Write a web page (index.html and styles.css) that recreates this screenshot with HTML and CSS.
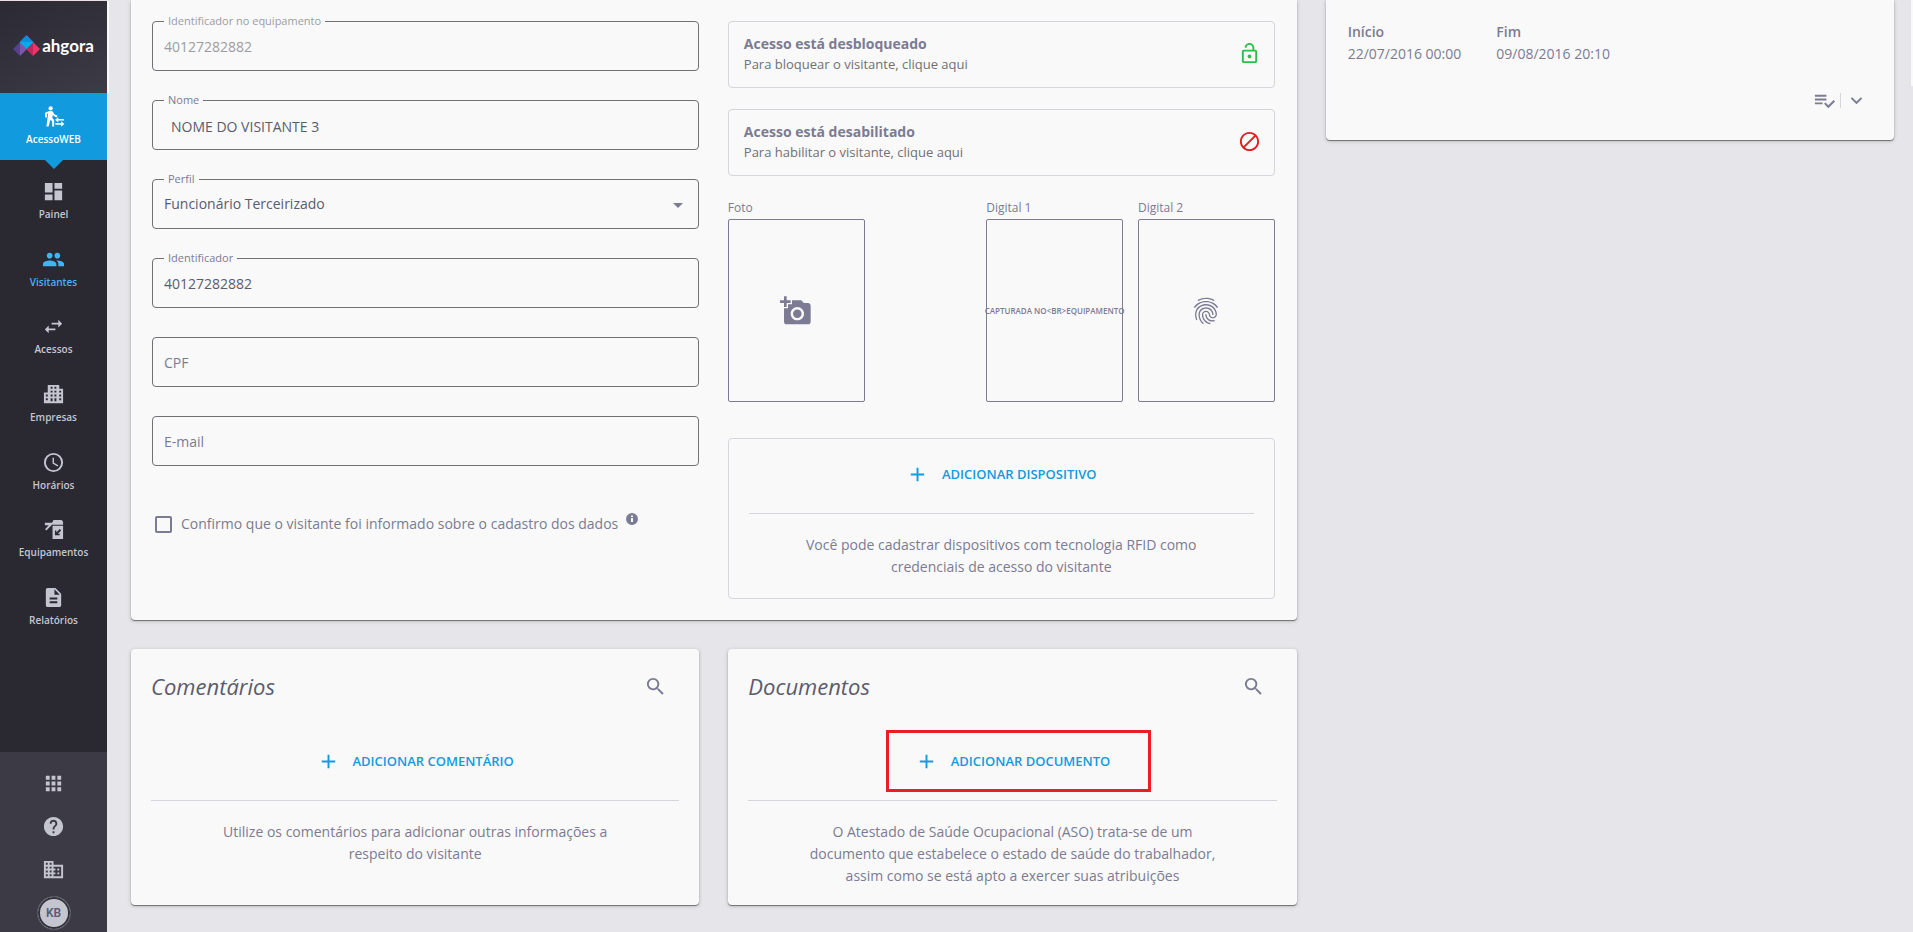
FILE: index.html
```html
<!DOCTYPE html>
<html lang="pt-BR">
<head>
<meta charset="utf-8">
<title>Ahgora - Visitantes</title>
<link rel="stylesheet" href="styles.css">
</head>
<body>
<div class="app">
  <aside class="sidebar">
    <a class="brand" href="#">
      <svg class="brand-mark" viewBox="0 0 27 22" aria-hidden="true">
        <path fill="#5a3f8f" d="M0 14l7-7v14z"/><path fill="#7e57a8" d="M7 7l7 7-7 7z"/>
        <path fill="#c2255f" d="M13 14l7-7v14z"/><path fill="#ee3466" d="M20 7l7 7-7 7z"/>
        <path fill="#0b8fd9" d="M13.500 0l7 7h-14z"/><path fill="#08a9ef" d="M6.500 7h14l-7 7z"/>
      </svg>
      <span class="brand-name">ahgora</span>
    </a>
    <a class="module" href="#">
      <svg class="icon" viewBox="0 0 24 24" aria-hidden="true"><circle cx="9" cy="3.400" r="2.200"/><path d="M7.600 6.200 3.200 8.200V13h1.900V9.500l1.300-.6L4.600 22.500h2.300l1.900-7.200 1.800 2v5.200h2.100v-6.800l-2-2.200.6-3c1.100 1.300 2.500 2.100 4.600 2.200V10.700c-1.700 0-2.800-.7-3.500-1.900l-.9-1.500c-.8-1.200-2-1.600-3.900-1.100zM17 12.700l-3.300 2.800 3.300 2.800v-2h6v-1.700h-6zM20 16.900v2h-6v1.700h6v2l3.300-2.900z"/></svg>
      <span>AcessoWEB</span>
    </a>
    <nav class="menu">
      <ul class="menu-list">
        <li><a class="menu-item" href="#"><svg class="icon" viewBox="0 0 24 24" aria-hidden="true"><path d="M3 13h8V3H3v10zm0 8h8v-6H3v6zm10 0h8V11h-8v10zm0-18v6h8V3h-8z"/></svg><span>Painel</span></a></li>
        <li><a class="menu-item menu-item--current" href="#"><svg class="icon" viewBox="0 0 24 24" aria-hidden="true"><path d="M16 11c1.660 0 2.990-1.340 2.990-3S17.660 5 16 5s-3 1.340-3 3 1.340 3 3 3zm-8 0c1.660 0 2.990-1.340 2.990-3S9.660 5 8 5 5 6.340 5 8s1.340 3 3 3zm0 2c-2.330 0-7 1.170-7 3.500V19h14v-2.500c0-2.330-4.670-3.500-7-3.500zm8 0c-.29 0-.62.02-.97.05 1.160.84 1.970 1.970 1.970 3.450V19h6v-2.500c0-2.330-4.670-3.500-7-3.500z"/></svg><span>Visitantes</span></a></li>
        <li><a class="menu-item" href="#"><svg class="icon" viewBox="0 0 24 24" aria-hidden="true"><path d="M6.990 11L3 15l3.990 4v-3H14v-2H6.990v-3zM21 9l-3.990-4v3H10v2h7.010v3L21 9z"/></svg><span>Acessos</span></a></li>
        <li><a class="menu-item" href="#"><svg class="icon" viewBox="0 0 24 24" aria-hidden="true"><path fill-rule="evenodd" d="M6 2h12v4h4v15H2V10h4zM9 4v2h2V4zM13 4v2h2V4zM9 8v2h2V8zM13 8v2h2V8zM9 12v2h2v-2zM13 12v2h2v-2zM9 16v3h2v-3zM13 16v3h2v-3zM4 12v2h2v-2zM4 16v2h2v-2zM18 8v2h2V8zM18 12v2h2v-2zM18 16v2h2v-2z"/></svg><span>Empresas</span></a></li>
        <li><a class="menu-item" href="#"><svg class="icon" viewBox="0 0 24 24" aria-hidden="true"><path d="M12 20a8 8 0 1 0 0-16 8 8 0 0 0 0 16zm0-18a10 10 0 1 1 0 20 10 10 0 0 1 0-20zm.5 5v5.250l4.500 2.670-.75 1.230L11 13V7h1.500z"/></svg><span>Horários</span></a></li>
        <li><a class="menu-item" href="#"><svg class="icon" viewBox="0 0 24 24" aria-hidden="true"><path fill-rule="evenodd" d="M12 2h8.500L22 4v3H11V6.500L4.500 13 3.200 11.700 7 7.500H3V5h7.500zM11 8h11v14H11zM18.500 11.500l-3.500 3.500V13h-1.500v5h5v-1.500h-2l3.500-3.500z"/></svg><span>Equipamentos</span></a></li>
        <li><a class="menu-item" href="#"><svg class="icon" viewBox="0 0 24 24" aria-hidden="true"><path d="M14 2H6c-1.100 0-2 .9-2 2v16c0 1.100.9 2 2 2h12c1.100 0 2-.9 2-2V8l-6-6zm2 16H8v-2h8v2zm0-4H8v-2h8v2zm-3-5V3.500L18.500 9H13z"/></svg><span>Relatórios</span></a></li>
      </ul>
    </nav>
    <div class="tools">
      <button class="tool" aria-label="Aplicativos"><svg class="icon" viewBox="0 0 24 24" aria-hidden="true"><path d="M4 8h4V4H4v4zm6 12h4v-4h-4v4zm-6 0h4v-4H4v4zm0-6h4v-4H4v4zm6 0h4v-4h-4v4zm6-10v4h4V4h-4zm-6 4h4V4h-4v4zm6 6h4v-4h-4v4zm0 6h4v-4h-4v4z"/></svg></button>
      <button class="tool" aria-label="Ajuda"><svg class="icon" viewBox="0 0 24 24" aria-hidden="true"><path d="M12 2C6.480 2 2 6.480 2 12s4.480 10 10 10 10-4.480 10-10S17.520 2 12 2zm1 17h-2v-2h2v2zm2.070-7.750l-.9.92C13.450 12.900 13 13.500 13 15h-2v-.5c0-1.100.45-2.100 1.170-2.830l1.240-1.260c.37-.36.59-.86.59-1.410 0-1.100-.9-2-2-2s-2 .9-2 2H8c0-2.210 1.790-4 4-4s4 1.790 4 4c0 .88-.36 1.680-.93 2.250z"/></svg></button>
      <button class="tool" aria-label="Empresa"><svg class="icon" viewBox="0 0 24 24" aria-hidden="true"><path d="M12 7V3H2v18h20V7H12zM6 19H4v-2h2v2zm0-4H4v-2h2v2zm0-4H4V9h2v2zm0-4H4V5h2v2zm4 12H8v-2h2v2zm0-4H8v-2h2v2zm0-4H8V9h2v2zm0-4H8V5h2v2zm10 12h-8v-2h2v-2h-2v-2h2v-2h-2V9h8v10zm-2-8h-2v2h2v-2zm0 4h-2v2h2v-2z"/></svg></button>
      <button class="avatar">KB</button>
    </div>
  </aside>

  <main class="content">
    <section class="card card--visitor">
      <form class="visitor-form">
        <div class="field-column">
          <div class="field field--disabled">
            <input class="field-input" id="equip-id" value="40127282882" disabled>
            <label class="field-label" for="equip-id">Identificador no equipamento</label>
          </div>
          <div class="field">
            <input class="field-input field-input--indented" id="name" value="NOME DO VISITANTE 3">
            <label class="field-label" for="name">Nome</label>
          </div>
          <div class="field">
            <select class="field-input" id="profile"><option>Funcionário Terceirizado</option></select>
            <label class="field-label" for="profile">Perfil</label>
            <svg class="field-caret" viewBox="0 0 10 5" aria-hidden="true"><path d="M0 0h10L5 5z"/></svg>
          </div>
          <div class="field">
            <input class="field-input" id="ident" value="40127282882">
            <label class="field-label" for="ident">Identificador</label>
          </div>
          <div class="field"><input class="field-input" placeholder="CPF" aria-label="CPF"></div>
          <div class="field"><input class="field-input" type="email" placeholder="E-mail" aria-label="E-mail"></div>
          <div class="consent">
            <input class="consent-box" type="checkbox" id="consent">
            <label for="consent">Confirmo que o visitante foi informado sobre o cadastro dos dados</label>
            <svg class="consent-info" viewBox="0 0 24 24" aria-hidden="true"><path d="M12 0a12 12 0 1 0 0 24 12 12 0 0 0 0-24zm2 18h-4v-8h4zm0-10h-4V5h4z"/></svg>
          </div>
        </div>

        <div class="access-column">
          <button class="access" type="button">
            <span class="access-text"><strong>Acesso está desbloqueado</strong><span>Para bloquear o visitante, clique aqui</span></span>
            <svg class="icon icon--green" viewBox="0 0 24 24" aria-hidden="true"><path d="M12 17c1.100 0 2-.9 2-2s-.9-2-2-2-2 .9-2 2 .9 2 2 2zm6-9h-1V6c0-2.760-2.240-5-5-5S7 3.240 7 6h1.900c0-1.710 1.390-3.100 3.100-3.100 1.710 0 3.100 1.390 3.100 3.100v2H6c-1.100 0-2 .9-2 2v10c0 1.100.9 2 2 2h12c1.100 0 2-.9 2-2V10c0-1.100-.9-2-2-2zm0 12H6V10h12v10z"/></svg>
          </button>
          <button class="access" type="button">
            <span class="access-text"><strong>Acesso está desabilitado</strong><span>Para habilitar o visitante, clique aqui</span></span>
            <svg class="icon icon--red" viewBox="0 0 24 24" aria-hidden="true"><path d="M12 2C6.480 2 2 6.480 2 12s4.480 10 10 10 10-4.480 10-10S17.520 2 12 2zM4 12c0-4.420 3.580-8 8-8 1.850 0 3.550.63 4.900 1.690L5.690 16.900C4.630 15.550 4 13.850 4 12zm8 8c-1.850 0-3.550-.63-4.900-1.690L18.310 7.100C19.370 8.450 20 10.150 20 12c0 4.420-3.580 8-8 8z"/></svg>
          </button>
          <div class="captures">
            <div class="capture capture--photo">
              <span id="cap-photo">Foto</span>
              <button class="capture-box" type="button" aria-labelledby="cap-photo"><svg class="icon icon--large" viewBox="0 0 24 24" aria-hidden="true"><path d="M3 4V1h2v3h3v2H5v3H3V6H0V4h3zm3 6V7h3V4h7l1.830 2H21c1.100 0 2 .9 2 2v12c0 1.100-.9 2-2 2H5c-1.100 0-2-.9-2-2V10h3zm7 9c2.760 0 5-2.240 5-5s-2.240-5-5-5-5 2.240-5 5 2.240 5 5 5zm-3.200-5c0 1.770 1.430 3.200 3.200 3.200s3.200-1.430 3.200-3.200-1.430-3.200-3.200-3.200-3.200 1.430-3.200 3.200z"/></svg></button>
            </div>
            <div class="capture">
              <span>Digital 1</span>
              <button class="capture-box" type="button">CAPTURADA NO&lt;BR&gt;EQUIPAMENTO</button>
            </div>
            <div class="capture">
              <span id="cap-finger">Digital 2</span>
              <button class="capture-box" type="button" aria-labelledby="cap-finger"><svg class="icon icon--large" viewBox="0 0 24 24" aria-hidden="true"><path d="M17.810 4.470c-.08 0-.16-.02-.23-.06C15.660 3.420 14 3 12.010 3c-1.980 0-3.860.47-5.570 1.410-.24.13-.54.04-.68-.2-.13-.24-.04-.55.2-.68C7.820 2.520 9.860 2 12.010 2c2.130 0 3.990.47 6.030 1.520.25.13.34.43.21.67-.09.18-.26.28-.44.28zM3.500 9.720c-.1 0-.2-.03-.29-.09-.23-.16-.28-.47-.12-.7.99-1.400 2.250-2.500 3.750-3.270C9.980 4.040 14 4.030 17.150 5.650c1.500.77 2.760 1.860 3.750 3.250.16.22.11.54-.12.7-.23.16-.54.11-.7-.12-.9-1.260-2.040-2.250-3.390-2.940-2.870-1.470-6.540-1.470-9.400.01-1.360.7-2.500 1.700-3.400 2.960-.08.14-.23.21-.39.21zm6.250 12.070c-.13 0-.26-.05-.35-.15-.87-.87-1.340-1.430-2.010-2.640-.69-1.230-1.050-2.730-1.050-4.340 0-2.970 2.540-5.390 5.660-5.390s5.660 2.420 5.660 5.390c0 .28-.22.5-.5.5s-.5-.22-.5-.5c0-2.420-2.090-4.390-4.660-4.390-2.570 0-4.660 1.970-4.660 4.390 0 1.440.32 2.770.93 3.850.64 1.150 1.080 1.640 1.850 2.420.19.2.19.51 0 .71-.11.1-.24.15-.37.15zm7.170-1.850c-1.190 0-2.240-.3-3.100-.89-1.490-1.010-2.380-2.650-2.380-4.390 0-.28.22-.5.5-.5s.5.22.5.5c0 1.410.72 2.740 1.940 3.560.71.48 1.540.71 2.540.71.24 0 .64-.03 1.040-.1.27-.05.53.13.58.41.05.27-.13.53-.41.58-.57.11-1.070.12-1.210.12zM14.910 22c-.04 0-.09-.01-.13-.02-1.590-.44-2.630-1.030-3.720-2.100-1.400-1.390-2.170-3.240-2.170-5.220 0-1.620 1.380-2.940 3.080-2.940 1.700 0 3.080 1.320 3.080 2.940 0 1.070.93 1.940 2.080 1.940s2.080-.87 2.080-1.940c0-3.770-3.250-6.830-7.250-6.830-2.840 0-5.440 1.580-6.610 4.030-.39.81-.59 1.760-.59 2.800 0 .78.07 2.010.67 3.610.1.26-.03.55-.29.64-.26.1-.55-.04-.64-.29-.49-1.310-.73-2.610-.73-3.960 0-1.200.23-2.290.68-3.240 1.330-2.790 4.280-4.600 7.510-4.600 4.550 0 8.250 3.510 8.250 7.830 0 1.620-1.380 2.940-3.080 2.940s-3.080-1.320-3.080-2.940c0-1.070-.93-1.940-2.080-1.940s-2.080.87-2.080 1.940c0 1.710.66 3.310 1.870 4.510.95.94 1.860 1.460 3.270 1.850.27.07.42.35.35.61-.05.23-.26.38-.47.38z"/></svg></button>
            </div>
          </div>
          <div class="devices">
            <button class="add" type="button"><svg class="icon" viewBox="0 0 24 24" aria-hidden="true"><path d="M19 13h-6v6h-2v-6H5v-2h6V5h2v6h6v2z"/></svg>ADICIONAR DISPOSITIVO</button>
            <p class="hint">Você pode cadastrar dispositivos com tecnologia RFID como credenciais de acesso do visitante</p>
          </div>
        </div>
      </form>
    </section>

    <section class="card card--period">
      <dl class="period">
        <div><dt>Início</dt><dd>22/07/2016 00:00</dd></div>
        <div><dt>Fim</dt><dd>09/08/2016 20:10</dd></div>
      </dl>
      <div class="period-actions">
        <button class="icon-button" aria-label="Lista"><svg class="icon" viewBox="0 0 24 24" aria-hidden="true"><path d="M14 10H2v2h12v-2zm0-4H2v2h12V6zM2 16h8v-2H2v2zm19.500-4.500L23 13l-6.990 7-4.510-4.500L13 14l3.010 3 5.490-5.500z"/></svg></button>
        <span class="separator"></span>
        <button class="icon-button" aria-label="Expandir"><svg class="icon" viewBox="0 0 24 24" aria-hidden="true"><path d="M7.410 8.590L12 13.170l4.590-4.580L18 10l-6 6-6-6z"/></svg></button>
      </div>
    </section>

    <section class="card card--list">
      <header class="card-header">
        <h2>Comentários</h2>
        <button class="icon-button" aria-label="Buscar comentários"><svg class="icon" viewBox="0 0 24 24" aria-hidden="true"><path d="M15.500 14h-.79l-.28-.27A6.470 6.470 0 0 0 16 9.500 6.500 6.500 0 1 0 9.500 16c1.610 0 3.090-.59 4.230-1.570l.27.28v.79l5 4.990L20.490 19l-4.990-5zm-6 0C7.010 14 5 11.990 5 9.500S7.010 5 9.500 5 14 7.010 14 9.500 11.990 14 9.500 14z"/></svg></button>
      </header>
      <button class="add" type="button"><svg class="icon" viewBox="0 0 24 24" aria-hidden="true"><path d="M19 13h-6v6h-2v-6H5v-2h6V5h2v6h6v2z"/></svg>ADICIONAR COMENTÁRIO</button>
      <p class="hint">Utilize os comentários para adicionar outras informações a respeito do visitante</p>
    </section>

    <section class="card card--list">
      <header class="card-header">
        <h2>Documentos</h2>
        <button class="icon-button" aria-label="Buscar documentos"><svg class="icon" viewBox="0 0 24 24" aria-hidden="true"><path d="M15.500 14h-.79l-.28-.27A6.470 6.470 0 0 0 16 9.500 6.500 6.500 0 1 0 9.500 16c1.610 0 3.090-.59 4.230-1.570l.27.28v.79l5 4.990L20.490 19l-4.990-5zm-6 0C7.010 14 5 11.990 5 9.500S7.010 5 9.500 5 14 7.010 14 9.500 11.990 14 9.500 14z"/></svg></button>
      </header>
      <button class="add add--highlighted" type="button"><svg class="icon" viewBox="0 0 24 24" aria-hidden="true"><path d="M19 13h-6v6h-2v-6H5v-2h6V5h2v6h6v2z"/></svg>ADICIONAR DOCUMENTO</button>
      <p class="hint">O Atestado de Saúde Ocupacional (ASO) trata-se de um documento que estabelece o estado de saúde do trabalhador, assim como se está apto a exercer suas atribuições</p>
    </section>
  </main>
  <div class="scroll-edge"></div>
</div>
</body>
</html>
```

FILE: styles.css
```css
* { box-sizing: border-box; }

body {
  margin: 0;
  background: #e6e5ea;
  color: #7b7b93;
  font: 14px/22px "Open Sans", "Noto Sans", sans-serif;
}

button, input, select { font: inherit; color: inherit; }

button {
  padding: 0;
  border: 0;
  background: none;
  cursor: pointer;
}

a { color: inherit; text-decoration: none; }

.icon {
  display: block;
  flex: none;
  width: 23px;
  height: 23px;
  fill: currentColor;
}
.icon--large { width: 32px; height: 32px; }
.icon--green { fill: #2bbd4e; }
.icon--red { fill: #e31b23; }

.app {
  display: grid;
  grid-template-columns: 107px 1fr 2px;
  min-height: 100vh;
}

/* Sidebar */
.sidebar {
  display: flex;
  flex-direction: column;
  height: 100vh;
  border-top: 1px solid #ecdfe4;
  background: #2a2932;
  color: #c5c5d0;
  font-size: 10px;
  line-height: 14px;
  font-weight: 600;
}

.brand {
  display: flex;
  align-items: center;
  justify-content: center;
  gap: 2px;
  height: 92px;
  padding-bottom: 2px;
  background: linear-gradient(155deg, #2b2a33, #3c3b46);
  box-shadow: 2px 0 0 #f9f9f9;
}
.brand-mark { width: 27px; height: 22px; }
.brand-name { color: #fff; font: 700 17px/20px Lato, sans-serif; }

.module {
  position: relative;
  display: flex;
  flex-direction: column;
  align-items: center;
  gap: 4px;
  height: 67px;
  padding-top: 12px;
  background: #129adf;
  color: #fff;
}
.module::after {
  content: "";
  position: absolute;
  top: 100%;
  border: 9px solid transparent;
  border-top-color: #129adf;
  border-bottom: 0;
}

.menu { flex: 1; }
.menu-list {
  display: grid;
  grid-auto-rows: 1fr;
  height: 80%;
  margin: 0;
  padding: 0;
  list-style: none;
}
.menu-item {
  display: flex;
  flex-direction: column;
  align-items: center;
  gap: 4px;
  padding-top: 20px;
}
.menu-item--current { color: #41b4f5; }

.tools {
  display: flex;
  flex-direction: column;
  align-items: center;
  gap: 20px;
  height: 180px;
  padding-top: 20px;
  background: #3c3b45;
}
.avatar {
  flex: none;
  width: 34px;
  height: 34px;
  margin-top: -5px;
  border: 1px solid #565564;
  border-radius: 50%;
  background: #c5c5d0;
  box-shadow: inset 0 0 0 2px #33323c;
  color: #5c5b70;
  font: 600 12px/32px Roboto, sans-serif;
}

/* Content */
.content {
  display: grid;
  grid-template-columns: repeat(3, 1fr);
  align-content: start;
  gap: 29px;
  padding: 0 17px 26px 24px;
}

.card {
  border-radius: 4px;
  background: #f9f9f9;
  box-shadow: 0 1px 1px rgba(0, 0, 0, .45), 0 1px 4px rgba(0, 0, 0, .2);
}
.card--visitor {
  grid-column: span 2;
  padding: 21px 22px 21px 21px;
  border-radius: 0 0 4px 4px;
}

.visitor-form {
  display: grid;
  grid-template-columns: 1fr 1fr;
  gap: 29px;
}

.field-column {
  display: flex;
  flex-direction: column;
  gap: 29px;
}
.field { position: relative; }
.field-input {
  display: block;
  width: 100%;
  height: 50px;
  padding: 0 11px;
  border: 1px solid #707075;
  border-radius: 4px;
  background: none;
  color: #5b5b6e;
  appearance: none;
}
.field-input::placeholder { color: #7b7b93; opacity: 1; }
.field-input--indented { padding: 2px 18px 0; }
.field-label {
  position: absolute;
  top: -8px;
  left: 12px;
  padding: 0 4px;
  background: #f9f9f9;
  font-size: 11px;
  line-height: 16px;
}
.field--disabled .field-input,
.field--disabled .field-label { color: #9c9ca4; }
.field-caret {
  position: absolute;
  top: 24px;
  right: 16px;
  width: 10px;
  height: 5px;
  fill: #7b7b93;
  pointer-events: none;
}

.consent {
  display: flex;
  align-items: center;
  margin-top: 18px;
  padding-left: 3px;
}
.consent-box {
  width: 17px;
  height: 17px;
  margin: 0 9px 0 0;
  border: 2px solid #7b7b93;
  border-radius: 2px;
  appearance: none;
}
.consent-info {
  align-self: flex-start;
  width: 12px;
  height: 12px;
  margin-left: 8px;
  fill: #7b7b93;
}

.access-column { display: flex; flex-direction: column; }
.access {
  display: flex;
  align-items: center;
  justify-content: space-between;
  height: 67px;
  margin-bottom: 21px;
  padding: 0 13px 2px 15px;
  border: 1px solid #d5d5dc;
  border-radius: 4px;
  text-align: left;
}
.access-text {
  display: flex;
  flex-direction: column;
  line-height: 20px;
}
.access-text span { color: #707075; font-size: 13px; }

.captures {
  display: flex;
  gap: 15px;
  font-size: 12px;
}
.capture {
  display: flex;
  flex-direction: column;
  flex: 0 1 25%;
  min-width: 0;
}
.capture--photo { margin-right: auto; }
.capture-box {
  display: flex;
  align-items: center;
  justify-content: center;
  height: 183px;
  border: 1px solid #7b7b93;
  border-radius: 2px;
  font-size: 8px;
  font-weight: 600;
  white-space: nowrap;
}

.devices {
  display: flex;
  flex-direction: column;
  margin-top: 36px;
  padding: 10px 20px 20px;
  border: 1px solid #d5d5dc;
  border-radius: 4px;
}

.add {
  position: relative;
  display: flex;
  align-items: center;
  align-self: center;
  gap: 13px;
  height: 50px;
  padding: 0 12px;
  color: #129adf;
  font-size: 13px;
  font-weight: 600;
}
.add--highlighted::after {
  content: "";
  position: absolute;
  inset: -6px -29px -6px -17px;
  border: 3px solid #ee1c24;
}

.hint {
  margin: 14px 0 0;
  padding: 20px 10% 0;
  border-top: 1px solid #d5d5dc;
  text-align: center;
}

/* Comments and documents */
.card--list {
  display: flex;
  flex-direction: column;
  padding: 20px 20px 18px;
}
.card-header {
  display: flex;
  align-items: center;
  justify-content: space-between;
  height: 34px;
  margin-bottom: 33px;
  padding-right: 12px;
}
.card-header h2 {
  margin: 0;
  color: #5b5b6e;
  font-size: 22px;
  line-height: 34px;
  font-style: italic;
  font-weight: 400;
}

/* Visit period */
.card--period {
  align-self: start;
  padding: 21px 21px 28px 22px;
  border-radius: 0 0 4px 4px;
}
.period {
  display: flex;
  gap: 35px;
  margin: 0;
}
.period dt { font-weight: 600; }
.period dd { margin: 0; }
.period-actions {
  display: flex;
  align-items: center;
  justify-content: flex-end;
  gap: 4px;
  margin-top: 24px;
  padding-right: 5px;
}
.separator { width: 1px; height: 15px; background: #d5d5dc; }

.scroll-edge { height: 86px; background: #f9f9f9; }
```
